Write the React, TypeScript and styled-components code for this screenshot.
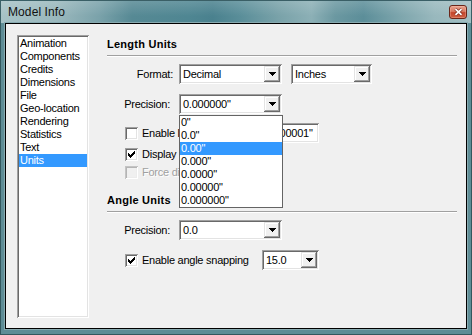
import React from "react";
import styled, { createGlobalStyle, css } from "styled-components";

const GlobalStyle = createGlobalStyle`
	*, *::before, *::after { box-sizing: border-box; }
	html, body { margin: 0; padding: 0; background: #ffffff; }
	body {
		font-family: "Liberation Sans", Arial, sans-serif;
		font-size: 11px;
		letter-spacing: -0.25px;
		color: #000;
	}
`;

// classic 3d edges
const sunken = css`
	box-shadow: inset 1px 1px 0 #a0a0a0, inset -1px -1px 0 #ffffff,
		inset 2px 2px 0 #696969, inset -2px -2px 0 #e3e3e3;
`;
const raised = css`
	box-shadow: inset -1px -1px 0 #696969, inset 1px 1px 0 #e3e3e3,
		inset -2px -2px 0 #a0a0a0, inset 2px 2px 0 #ffffff;
`;

const Window = styled.div`
	width: 472px;
	height: 335px;
	display: flex;
	flex-direction: column;
	overflow: hidden;
`;

const TitleBar = styled.div`
	height: 23px;
	flex: none;
	display: flex;
	align-items: center;
	justify-content: space-between;
	padding: 0 5px 0 8px;
	background: linear-gradient(180deg, rgba(255, 255, 255, 0.16), rgba(255, 255, 255, 0) 70%),
		linear-gradient(
			90deg,
			#a7c2c6 0%,
			#9ab8bd 12%,
			#7aa2aa 21%,
			#568994 28%,
			#4f8692 40%,
			#4a818e 45%,
			#5a8e99 51%,
			#79a2a9 59%,
			#8cb0b6 66%,
			#6b98a1 71%,
			#5c8e99 77%,
			#7ea6ad 85%,
			#98b8bd 92%,
			#a2bfc3 100%
		);
	box-shadow: inset 1px 1px 0 #3a5f66, inset -1px 0 0 #3a5f66;
`;

const Title = styled.span`
	font-size: 12px;
	letter-spacing: 0.1px;
	color: #111;
	padding-top: 1px;
`;

const CloseButton = styled.div`
	width: 18px;
	height: 14px;
	border: 1px solid #6a2619;
	border-radius: 3px;
	display: flex;
	align-items: center;
	justify-content: center;
	background: linear-gradient(180deg, #e8a48f 0%, #d97a62 45%, #c4462c 55%, #cf5f43 100%);
	box-shadow: inset 0 0 0 1px rgba(255, 210, 190, 0.3);
`;

const Frame = styled.div`
	flex: 1;
	display: flex;
	padding: 0 5px 6px;
	background: #5e8d96;
	box-shadow: inset 1px 0 0 #33585e, inset -1px 0 0 #33585e, inset 0 -1px 0 #33585e;
`;

const Client = styled.div`
	flex: 1;
	display: flex;
	gap: 18px;
	border: 1px solid #000;
	background: #f0f0f0;
	padding: 11px 9px 10px 11px;
	box-shadow: 0 0 0 1px #88aab0;
`;

const CategoryList = styled.div`
	width: 72px;
	flex: none;
	display: flex;
	flex-direction: column;
	padding: 2px;
	background: #fff;
	${sunken};
`;

const CategoryItem = styled.div<{ $selected?: boolean }>`
	height: 13px;
	line-height: 13px;
	padding-left: 1px;
	white-space: nowrap;
	background: ${(p) => (p.$selected ? "#3399ff" : "transparent")};
	color: ${(p) => (p.$selected ? "#fff" : "#000")};
`;

const Panel = styled.div`
	flex: 1;
	min-width: 0;
	display: flex;
	flex-direction: column;
	padding-top: 3px;
`;

const SectionTitle = styled.div<{ $gap: number }>`
	height: 13px;
	line-height: 13px;
	font-weight: bold;
	letter-spacing: 0.25px;
	margin-top: ${(p) => p.$gap}px;
`;

const Separator = styled.div`
	height: 2px;
	border-top: 1px solid #a0a0a0;
	border-bottom: 1px solid #fff;
	margin: 4px 0 7px;
`;

const FieldRow = styled.div<{ $gap: number }>`
	display: flex;
	align-items: center;
	height: 20px;
	margin-top: ${(p) => p.$gap}px;
`;

const FieldLabel = styled.span<{ $pad: number }>`
	width: 72px;
	flex: none;
	text-align: right;
	padding-right: ${(p) => p.$pad}px;
	white-space: nowrap;
`;

const Combo = styled.div<{ $w: number; $ml?: number }>`
	position: relative;
	width: ${(p) => p.$w}px;
	height: 20px;
	flex: none;
	display: flex;
	align-items: center;
	padding: 2px;
	margin-left: ${(p) => p.$ml ?? 0}px;
	background: #fff;
	${sunken};
`;

const ComboValue = styled.span`
	flex: 1;
	padding-left: 2px;
	line-height: 16px;
	white-space: nowrap;
	overflow: hidden;
`;

const ComboButton = styled.span`
	width: 16px;
	height: 16px;
	flex: none;
	display: flex;
	align-items: center;
	justify-content: center;
	background: #f0f0f0;
	${raised};
`;

const DropList = styled.div`
	position: absolute;
	left: 0;
	top: calc(100% + 1px);
	width: 104px;
	background: #fff;
	border: 1px solid #646464;
	z-index: 10;
`;

const DropItem = styled.div<{ $selected?: boolean }>`
	height: 13px;
	line-height: 13px;
	padding-left: 1px;
	white-space: nowrap;
	background: ${(p) => (p.$selected ? "#3399ff" : "transparent")};
	color: ${(p) => (p.$selected ? "#fff" : "#000")};
`;

const CheckRow = styled.div<{ $gap: number; $h: number }>`
	display: flex;
	align-items: center;
	height: ${(p) => p.$h}px;
	margin-top: ${(p) => p.$gap}px;
	padding-left: 18px;
`;

const Box = styled.span<{ $disabled?: boolean }>`
	width: 13px;
	height: 13px;
	flex: none;
	display: flex;
	align-items: center;
	justify-content: center;
	${(p) =>
		p.$disabled
			? css`
					background: #f0f0f0;
					box-shadow: inset 1px 1px 0 #c4c4c4, inset -1px -1px 0 #ffffff,
						inset 2px 2px 0 #b4b4b4, inset -2px -2px 0 #ececec;
			  `
			: css`
					background: #fff;
					${sunken};
			  `}
`;

const CheckLabel = styled.span<{ $w?: number; $disabled?: boolean }>`
	margin-left: 4px;
	line-height: 13px;
	white-space: nowrap;
	width: ${(p) => (p.$w ? `${p.$w}px` : "auto")};
	flex: none;
	color: ${(p) => (p.$disabled ? "#a0a0a0" : "#000")};
	text-shadow: ${(p) => (p.$disabled ? "1px 1px 0 #fff" : "none")};
`;

const TextField = styled.div`
	width: 57px;
	height: 20px;
	flex: none;
	padding: 2px 3px;
	line-height: 16px;
	white-space: nowrap;
	overflow: hidden;
	background: #fff;
	${sunken};
`;

const Arrow = () => (
	<svg width='7' height='4' viewBox='0 0 7 4' shapeRendering='crispEdges'>
		<path d='M0 0h7v1H0z M1 1h5v1H1z M2 2h3v1H2z M3 3h1v1H3z' fill='#000' />
	</svg>
);

const Tick = () => (
	<svg width='7' height='7' viewBox='0 0 7 7' shapeRendering='crispEdges'>
		<path
			d='M6 0h1v1H6z M5 1h2v1H5z M0 2h1v1H0z M4 2h3v1H4z M0 3h2v1H0z M3 3h3v1H3z M0 4h5v1H0z M1 5h3v1H1z M2 6h1v1H2z'
			fill='#000'
		/>
	</svg>
);

const CloseGlyph = () => (
	<svg width='9' height='8' viewBox='0 0 9 8'>
		<path d='M1.5 1.2 L7.5 6.8 M7.5 1.2 L1.5 6.8' stroke='#7a2a1c' strokeWidth='3.2' />
		<path d='M1.5 1.2 L7.5 6.8 M7.5 1.2 L1.5 6.8' stroke='#fff' strokeWidth='1.8' />
	</svg>
);

interface ComboBoxProps {
	width: number;
	value: string;
	ml?: number;
	options?: string[];
	selected?: number;
}

const ComboBox: React.FunctionComponent<ComboBoxProps> = ({ width, value, ml, options, selected }) => {
	return (
		<Combo $w={width} $ml={ml}>
			<ComboValue>{value}</ComboValue>
			<ComboButton>
				<Arrow />
			</ComboButton>
			{options && (
				<DropList>
					{options.map((o, i) => (
						<DropItem key={o} $selected={i === selected}>
							{o}
						</DropItem>
					))}
				</DropList>
			)}
		</Combo>
	);
};

const CheckBox = ({ checked, disabled }: { checked?: boolean; disabled?: boolean }) => (
	<Box $disabled={disabled}>{checked && <Tick />}</Box>
);

const categories = [
	"Animation",
	"Components",
	"Credits",
	"Dimensions",
	"File",
	"Geo-location",
	"Rendering",
	"Statistics",
	"Text",
	"Units",
];

const precisions = ['0"', '0.0"', '0.00"', '0.000"', '0.0000"', '0.00000"', '0.000000"'];

const App = () => {
	return (
		<>
			<GlobalStyle />
			<Window>
				<TitleBar>
					<Title>Model Info</Title>
					<CloseButton>
						<CloseGlyph />
					</CloseButton>
				</TitleBar>
				<Frame>
					<Client>
						<CategoryList>
							{categories.map((c) => (
								<CategoryItem key={c} $selected={c === "Units"}>
									{c}
								</CategoryItem>
							))}
						</CategoryList>
						<Panel>
							<SectionTitle $gap={0}>Length Units</SectionTitle>
							<Separator />
							<FieldRow $gap={0}>
								<FieldLabel $pad={6}>Format:</FieldLabel>
								<ComboBox width={103} value='Decimal' />
								<ComboBox width={81} value='Inches' ml={9} />
							</FieldRow>
							<FieldRow $gap={10}>
								<FieldLabel $pad={9}>Precision:</FieldLabel>
								<ComboBox width={103} value='0.000000"' options={precisions} selected={2} />
							</FieldRow>
							<CheckRow $gap={9} $h={20}>
								<CheckBox />
								<CheckLabel $w={120}>Enable length snapping</CheckLabel>
								<TextField>0.000001"</TextField>
							</CheckRow>
							<CheckRow $gap={5} $h={13}>
								<CheckBox checked />
								<CheckLabel>Display units format</CheckLabel>
							</CheckRow>
							<CheckRow $gap={5} $h={13}>
								<CheckBox disabled />
								<CheckLabel $disabled>Force display of 0"</CheckLabel>
							</CheckRow>

							<SectionTitle $gap={15}>Angle Units</SectionTitle>
							<Separator />
							<FieldRow $gap={0}>
								<FieldLabel $pad={9}>Precision:</FieldLabel>
								<ComboBox width={103} value='0.0' />
							</FieldRow>
							<CheckRow $gap={10} $h={20}>
								<CheckBox checked />
								<CheckLabel $w={120}>Enable angle snapping</CheckLabel>
								<ComboBox width={57} value='15.0' />
							</CheckRow>
						</Panel>
					</Client>
				</Frame>
			</Window>
		</>
	);
};

export default App;
